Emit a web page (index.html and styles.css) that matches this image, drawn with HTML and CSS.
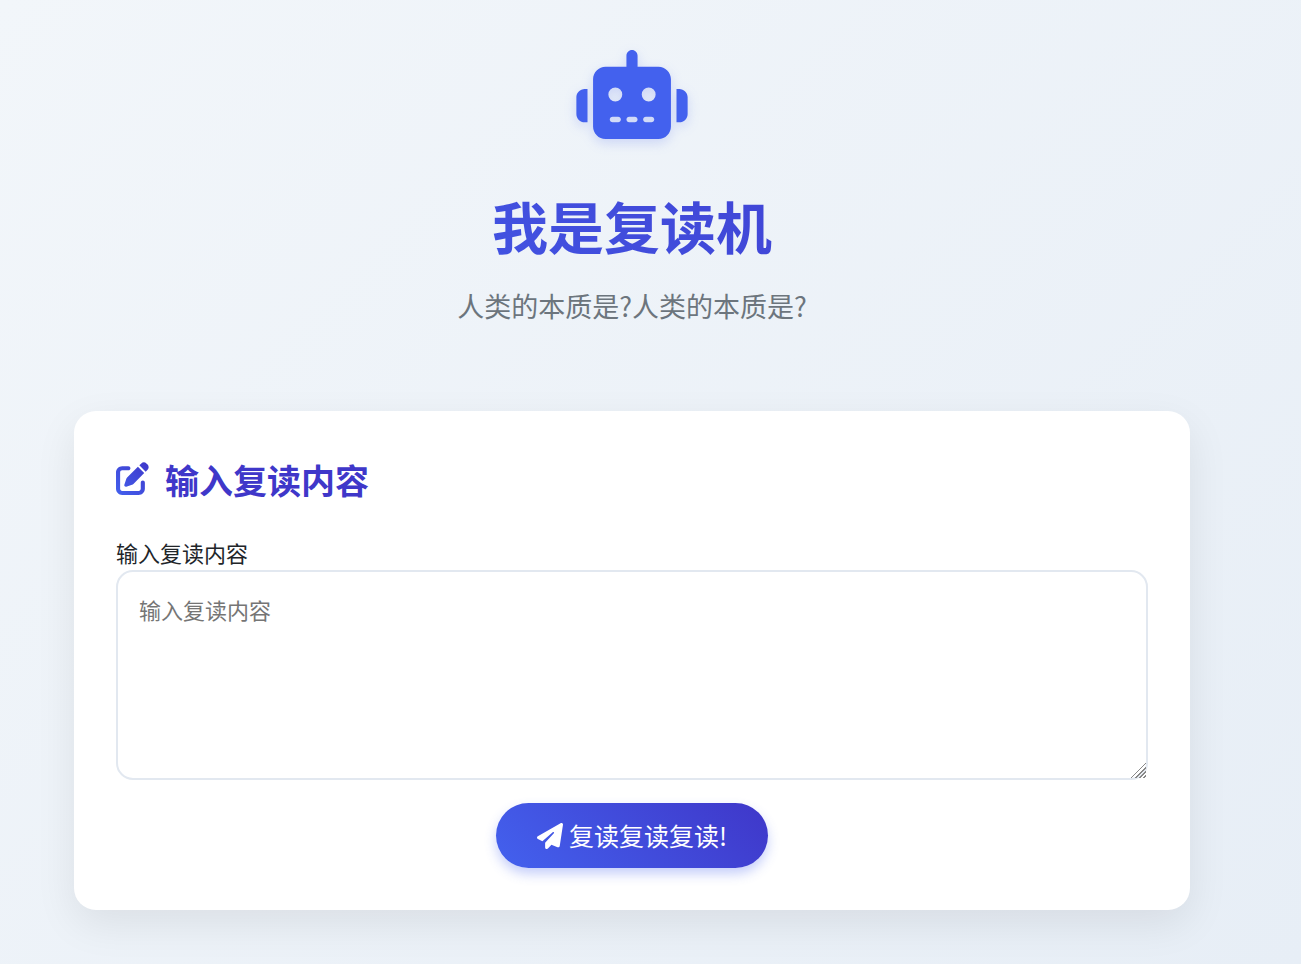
FILE: index.html
```html
<!DOCTYPE html>
<html lang="zh-CN">
<head>
  <meta charset="UTF-8">
  <meta name="viewport" content="width=device-width, initial-scale=1.0">
  <title>我是复读机</title>
  <link rel="stylesheet" href="styles.css">
</head>
<body>
  <div class="container">
    <header class="header">
      <svg class="logo" viewBox="0 0 640 512" aria-hidden="true"><path d="M320 0c17.7 0 32 14.3 32 32V96H472c39.8 0 72 32.2 72 72V440c0 39.8-32.2 72-72 72H168c-39.8 0-72-32.2-72-72V168c0-39.8 32.2-72 72-72H288V32c0-17.7 14.3-32 32-32zM208 384c-8.8 0-16 7.2-16 16s7.2 16 16 16h32c8.8 0 16-7.2 16-16s-7.2-16-16-16H208zm96 0c-8.8 0-16 7.2-16 16s7.2 16 16 16h32c8.8 0 16-7.2 16-16s-7.2-16-16-16H304zm96 0c-8.8 0-16 7.2-16 16s7.2 16 16 16h32c8.8 0 16-7.2 16-16s-7.2-16-16-16H400zM264 256a40 40 0 1 0 -80 0 40 40 0 1 0 80 0zm152 40a40 40 0 1 0 0-80 40 40 0 1 0 0 80zM48 224H64V416H48c-26.5 0-48-21.5-48-48V272c0-26.5 21.5-48 48-48zm544 0c26.5 0 48 21.5 48 48v96c0 26.5-21.5 48-48 48H576V224h16z"/></svg>
      <h1 class="title">我是复读机</h1>
      <p class="subtitle">人类的本质是?人类的本质是?</p>
    </header>

    <main class="card">
      <h2 class="card-title">
        <svg class="card-icon" viewBox="0 0 512 512" aria-hidden="true">
          <defs>
            <linearGradient id="iconFill" x1="0" y1="1" x2="1" y2="0">
              <stop offset="0" stop-color="#4361ee"/>
              <stop offset="1" stop-color="#3f37c9"/>
            </linearGradient>
          </defs>
          <path fill="url(#iconFill)" d="M471.6 21.7c-21.9-21.9-57.3-21.9-79.2 0L362.3 51.7l97.9 97.9 30.1-30.1c21.9-21.9 21.9-57.3 0-79.2L471.6 21.7zm-299.2 220c-6.1 6.1-10.8 13.6-13.5 21.9l-29.6 88.8c-2.9 8.6-.6 18.1 5.8 24.6s15.9 8.7 24.6 5.8l88.8-29.6c8.2-2.7 15.7-7.4 21.9-13.5L437.7 172.3 339.7 74.3 172.4 241.7zM96 64C43 64 0 107 0 160V416c0 53 43 96 96 96H352c53 0 96-43 96-96V320c0-17.7-14.3-32-32-32s-32 14.3-32 32v96c0 17.7-14.3 32-32 32H96c-17.7 0-32-14.3-32-32V160c0-17.7 14.3-32 32-32h96c17.7 0 32-14.3 32-32s-14.3-32-32-32H96z"/>
        </svg>
        输入复读内容
      </h2>
      <form class="repeat-form">
        <label for="content">输入复读内容</label>
        <textarea id="content" class="content-input" placeholder="输入复读内容"></textarea>
        <button type="button" class="btn">
          <svg class="btn-icon" viewBox="0 0 512 512" aria-hidden="true"><path d="M498.1 5.6c10.1 7 15.4 19.1 13.5 31.2l-64 416c-1.5 9.7-7.4 18.2-16 23s-18.9 5.4-28 1.6L284 427.7l-68.5 74.1c-8.9 9.7-22.9 12.9-35.2 8.1S160 493.2 160 480V396.4c0-4 1.5-7.8 4.2-10.7L331.8 202.8c5.8-6.3 5.6-16-.4-22s-15.7-6.4-22-.7L106 360.8 17.7 316.6C7.1 311.3 .3 300.7 0 288.9s5.9-22.8 16.1-28.7l448-256c10.7-6.1 23.9-5.5 34 1.4z"/></svg>
          复读复读复读!
        </button>
      </form>
    </main>
  </div>
</body>
</html>
```

FILE: styles.css
```css
:root {
  --primary: #4361ee;
  --secondary: #3f37c9;
  --gradient: linear-gradient(45deg, var(--primary), var(--secondary));
}

* {
  box-sizing: border-box;
}

body {
  margin: 0;
  min-height: 100vh;
  font-family: "Noto Sans CJK SC", sans-serif;
  font-size: 22px;
  line-height: 35px;
  color: #212529;
  background: linear-gradient(135deg, #f2f6fa, #e7eef6);
}

.container {
  padding: 50px 111px 54px 74px;
}

.header {
  display: flex;
  flex-direction: column;
  align-items: center;
  margin-bottom: 85px;
  text-align: center;
}

.logo {
  width: 112px;
  height: 89px;
  margin-bottom: 53px;
  fill: var(--primary);
  filter: drop-shadow(0 4px 6px rgba(67, 97, 238, 0.2));
}

.title {
  margin: 0 0 28px;
  font-size: 56px;
  line-height: 66px;
  font-weight: 700;
  background: var(--gradient);
  background-clip: text;
  -webkit-background-clip: text;
  color: transparent;
  align-self: stretch;
}

.subtitle {
  margin: 0;
  font-size: 27px;
  line-height: 40px;
  color: #6c757d;
}

.card {
  padding: 42px;
  background: #fff;
  border-radius: 22px;
  box-shadow: 0 14px 42px rgba(0, 0, 0, 0.08);
}

.card-title {
  display: flex;
  align-items: center;
  gap: 16px;
  margin: 0 0 28px;
  font-size: 34px;
  line-height: 54px;
  font-weight: 700;
  color: var(--secondary);
}

.card-icon {
  width: 33px;
  height: 33px;
  margin-bottom: 4px;
}

.repeat-form {
  display: flex;
  flex-direction: column;
}

.content-input {
  width: 100%;
  height: 210px;
  padding: 21px;
  font: inherit;
  line-height: 32px;
  color: inherit;
  background: #fff;
  border: 2px solid #e2e8f0;
  border-radius: 17px;
  resize: vertical;
}

.content-input::placeholder {
  color: #757575;
}

.content-input::-webkit-resizer {
  background: linear-gradient(135deg, transparent 48%, #888 48%, #888 53%, transparent 53%, transparent 62%, #888 62%, #888 67%, transparent 67%, transparent 76%, #888 76%, #888 81%, transparent 81%, transparent 90%, #888 90%, #888 95%, transparent 95%);
}

.content-input:focus {
  outline: none;
  border-color: var(--primary);
}

.btn {
  display: inline-flex;
  align-items: center;
  align-self: center;
  gap: 6px;
  margin-top: 23px;
  padding: 12px 41px;
  font-family: inherit;
  font-size: 25px;
  line-height: 41px;
  color: #fff;
  background: var(--gradient);
  border: none;
  border-radius: 50px;
  box-shadow: 0 6px 12px rgba(67, 97, 238, 0.3);
  cursor: pointer;
}

.btn-icon {
  width: 26px;
  height: 26px;
  fill: currentColor;
}
```
